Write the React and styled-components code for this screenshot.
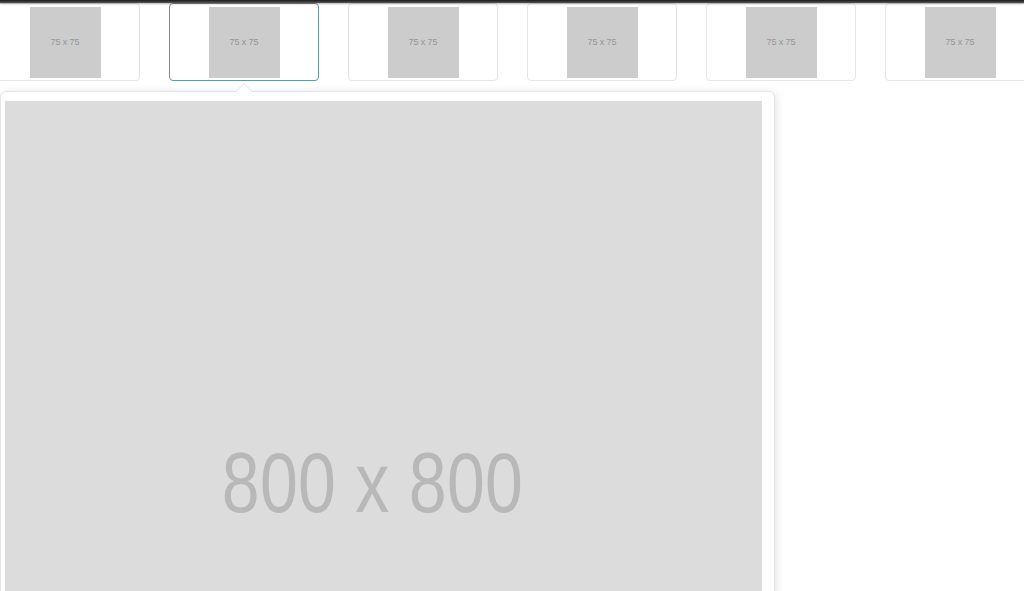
import styled, { createGlobalStyle } from "styled-components";

const GlobalStyle = createGlobalStyle`
  html, body {
    margin: 0;
    padding: 0;
    background: #fff;
    overflow: hidden;
  }
  body {
    font-family: "Liberation Sans", Arial, sans-serif;
  }
`;

const Page = styled.div`
  width: 1024px;
  height: 591px;
  overflow: hidden;
  display: flex;
  flex-direction: column;
`;

const TopBar = styled.div`
  flex: 0 0 3px;
  background: linear-gradient(#1a1a1a, #555);
  position: relative;
  z-index: 2;
  box-shadow: 0 1px 2px rgba(0, 0, 0, 0.3);
`;

const ThumbRow = styled.div`
  display: flex;
  gap: 29px;
  margin-left: -10px;
`;

const Thumb = styled.div`
  flex: 0 0 150px;
  height: 78px;
  box-sizing: border-box;
  border: 1px solid ${(p) => (p.$active ? "#6a93a6" : "#e6e6e6")};
  border-radius: 4px;
  display: flex;
  align-items: center;
  justify-content: center;
  background: #fff;
`;

const ThumbImg = styled.div`
  width: 71px;
  height: 71px;
  background: #cccccc;
  color: #969696;
  font-size: 9px;
  display: flex;
  align-items: center;
  justify-content: center;
  letter-spacing: -0.1px;
`;

const Stage = styled.div`
  position: relative;
  margin-top: 10px;
  width: 775px;
  box-sizing: border-box;
  padding: 9px 12px 0 4px;
  border: 1px solid #e4e4e4;
  border-bottom: none;
  border-radius: 6px 6px 0 0;
  box-shadow: 2px 1px 8px rgba(0, 0, 0, 0.1);
  background: #fff;
  flex: 1;
`;

const Caret = styled.span`
  position: absolute;
  top: -9px;
  left: ${(p) => p.$left}px;
  width: 0;
  height: 0;
  border-left: 9px solid transparent;
  border-right: 9px solid transparent;
  border-bottom: 9px solid #e0e0e0;
  &::after {
    content: "";
    position: absolute;
    left: -8px;
    top: 1px;
    border-left: 8px solid transparent;
    border-right: 8px solid transparent;
    border-bottom: 8px solid #fff;
  }
`;

const BigImg = styled.div`
  width: 757px;
  height: 757px;
  background: #dcdcdc;
  display: flex;
  align-items: center;
  justify-content: center;
  padding-right: 22px;
  box-sizing: border-box;
`;

const BigLabel = styled.span`
  display: inline-block;
  font-size: 68px;
  color: #b8b8b8;
  transform: scaleY(1.25);
  margin-top: 4px;
  letter-spacing: 0.3px;
`;

const thumbs = [0, 1, 2, 3, 4, 5];
const activeIndex = 1;

export default function App() {
  return (
    <>
      <GlobalStyle />
      <Page>
        <TopBar />
        <ThumbRow>
          {thumbs.map((i) => (
            <Thumb key={i} $active={i === activeIndex}>
              <ThumbImg>75 x 75</ThumbImg>
            </Thumb>
          ))}
        </ThumbRow>
        <Stage>
          <Caret $left={234} />
          <BigImg>
            <BigLabel>800 x 800</BigLabel>
          </BigImg>
        </Stage>
      </Page>
    </>
  );
}
